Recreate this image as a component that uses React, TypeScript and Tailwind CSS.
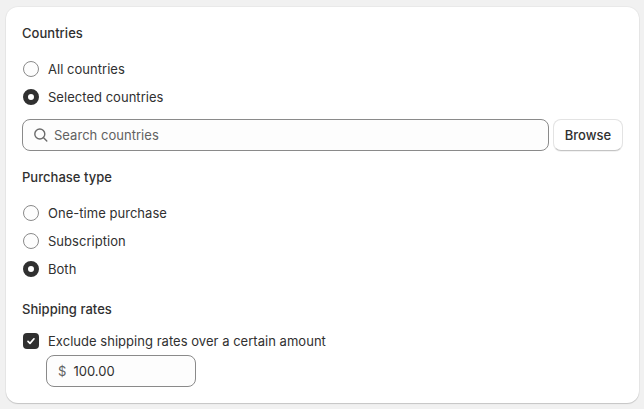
import React from 'react';

function Radio({ label, checked }: { label: string; checked?: boolean }) {
    return (
        <label className="flex items-center h-7 gap-[9px] pl-[1px]">
            {checked ? (
                <span className="w-4 h-4 rounded-full border-[5px] border-[#303030] bg-white shrink-0" />
            ) : (
                <span className="w-4 h-4 rounded-full border border-[#8a8a8a] bg-[#fdfdfd] shrink-0" />
            )}
            <span>{label}</span>
        </label>
    );
}

function Title({ children }: { children: React.ReactNode }) {
    return <h2 className="h-5 leading-5 font-[550] text-[#303030]">{children}</h2>;
}

export default function App() {
    return (
        <div className="w-[644px] h-[409px] bg-[#f1f1f1] pt-[7px] px-[6px] text-[13px] leading-5 tracking-[0.03px] text-[#303030] font-['Inter',sans-serif]">
            <div className="w-[633px] h-[396px] bg-white rounded-xl shadow-[0_1px_1px_rgba(0,0,0,0.16),0_0_0_1px_rgba(0,0,0,0.03)] p-4">
                <Title>Countries</Title>
                <div className="mt-3">
                    <Radio label="All countries" />
                    <Radio label="Selected countries" checked />
                </div>
                <div className="flex gap-1 mt-2 w-[601px]">
                    <div className="flex items-center flex-1 h-8 rounded-lg border border-[#8a8a8a] bg-[#fdfdfd] pl-[10px] gap-[5px] text-[#616161]">
                        <svg className="w-4 h-4 shrink-0" viewBox="0 0 16 16" fill="none" stroke="#6b6b6b" strokeWidth="1.4" strokeLinecap="round">
                            <circle cx="6.8" cy="7" r="5" />
                            <path d="M10.6 10.8L13.8 14" />
                        </svg>
                        <span>Search countries</span>
                    </div>
                    <button className="h-8 w-[70px] rounded-lg bg-white border border-[#e3e3e3] border-b-[#c4c4c4] font-[550] text-[#303030] shadow-[0_1px_0_rgba(0,0,0,0.05)]">
                        Browse
                    </button>
                </div>
                <div className="mt-4">
                    <Title>Purchase type</Title>
                </div>
                <div className="mt-3">
                    <Radio label="One-time purchase" />
                    <Radio label="Subscription" />
                    <Radio label="Both" checked />
                </div>
                <div className="mt-4">
                    <Title>Shipping rates</Title>
                </div>
                <label className="flex items-center h-5 mt-3 gap-[9px] pl-[1px]">
                    <span className="flex items-center justify-center w-4 h-4 rounded-[4px] bg-[#303030] shrink-0">
                        <svg className="w-3 h-3" viewBox="0 0 12 12" fill="none" stroke="white" strokeWidth="1.7" strokeLinecap="round" strokeLinejoin="round">
                            <path d="M3 6.4L5 8.4L9 3.8" />
                        </svg>
                    </span>
                    <span>Exclude shipping rates over a certain amount</span>
                </label>
                <div className="flex items-center w-[150px] h-8 mt-1 ml-6 rounded-lg border border-[#8a8a8a] bg-[#fdfdfd] pl-[11px] gap-[7px]">
                    <span className="text-[#616161]">$</span>
                    <span>100.00</span>
                </div>
            </div>
        </div>
    );
}
